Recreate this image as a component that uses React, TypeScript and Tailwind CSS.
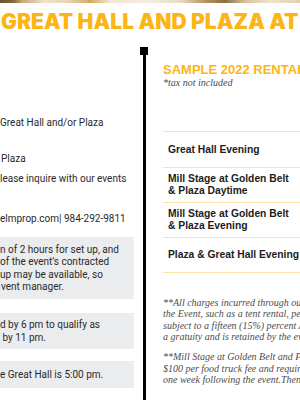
import React from "react";

const sans = { fontFamily: "Roboto, 'Liberation Sans', Arial, sans-serif" };
const arial = { fontFamily: "'Liberation Sans', Arial, sans-serif" };
const serif = { fontFamily: "'Liberation Serif', 'Times New Roman', serif" };
const title = { fontFamily: "Inter, 'Liberation Sans', sans-serif" };

const rows: string[][] = [
  ["Great Hall Evening"],
  ["Mill Stage at Golden Belt", "& Plaza Daytime"],
  ["Mill Stage at Golden Belt", "& Plaza Evening"],
  ["Plaza & Great Hall Evening"],
];

export default function App() {
  return (
    <div className="w-[300px] h-[400px] overflow-hidden bg-white flex flex-col">
      <div className="h-[3px] w-full shrink-0 bg-[linear-gradient(90deg,#6b5030_0px,#8a6a40_14px,#c9a877_22px,#efe3cf_45px,#e6d2ae_70px,#d4a860_90px,#f1e6d4_110px,#f5ecdf_150px,#e9dcc4_180px,#b89462_205px,#8d6d45_225px,#d8c09a_245px,#f0e4d0_270px,#e2cfae_300px)]" />
      <div className="h-[44px] shrink-0 pt-[8px] pl-[1px]">
        <div
          className="whitespace-nowrap text-[21px] leading-[21px] font-black tracking-[0.004em] text-[#FDB515]"
          style={title}
        >
          GREAT HALL AND PLAZA AT CHECKPOINT
        </div>
      </div>
      <div className="flex flex-1 items-stretch">
        {/* left column */}
        <div className="w-[134px] shrink-0 text-[10px] text-[#2a2a2a] whitespace-nowrap overflow-hidden" style={sans}>
          <div className="mt-[65.7px] leading-[20px]">Great Hall and/or Plaza</div>
          <div className="mt-[16.3px] leading-[20px] pl-[1px]">Plaza</div>
          <div className="leading-[20px]">lease inquire with our events</div>
          <div className="leading-[20px]">&nbsp;</div>
          <div className="leading-[20px]">elmprop.com| 984-292-9811</div>
          <div className="mt-[8px] bg-[#ebecee] pt-[7px] pb-[5px] leading-[12.5px]">
            <div>n of 2 hours for set up, and</div>
            <div>of the event’s contracted</div>
            <div>up may be available, so</div>
            <div className="pl-[1px]">vent manager.</div>
          </div>
          <div className="mt-[14px] bg-[#ebecee] py-[5px] leading-[13px]">
            <div>d by 6 pm to qualify as</div>
            <div className="whitespace-pre"> by 11 pm.</div>
          </div>
          <div className="mt-[12px] bg-[#ebecee] py-[7px] leading-[13px]">
            <div>e Great Hall is 5:00 pm.</div>
          </div>
        </div>
        {/* divider */}
        <div className="ml-[6px] w-[8px] shrink-0 flex flex-col items-center">
          <div className="w-[8px] h-[8px] bg-black shrink-0" />
          <div className="w-[3px] flex-1 bg-black" />
        </div>
        {/* right column */}
        <div className="ml-[15px] flex-1 min-w-0 overflow-hidden">
          <div className="pt-[15px] whitespace-nowrap text-[13px] leading-[15px] font-bold text-[#FDB515]" style={arial}>
            SAMPLE 2022 RENTAL RATES
          </div>
          <div className="text-[10px] leading-[11px] italic text-[#4a4a4a]" style={serif}>
            *tax not included
          </div>
          <div className="mt-[43px] border-t border-[#fde3a4]">
            {rows.map((r, i) => (
              <div
                key={i}
                className={`${i === 0 ? "h-[36px]" : "h-[35px]"} border-b border-[#fde3a4] pl-[5px] flex flex-col justify-center whitespace-nowrap text-[10.3px] leading-[12px] font-bold text-[#1c1c1c]`}
                style={arial}
              >
                {r.map((t, j) => (
                  <div key={j}>{t}</div>
                ))}
              </div>
            ))}
          </div>
          <div className="mt-[24px] whitespace-nowrap italic text-[10px] leading-[11.4px] text-[#4d4d4d]" style={serif}>
            <div>**All charges incurred through our preferred vendors for</div>
            <div>the Event, such as a tent rental, personnel, or equipment are</div>
            <div>subject to a fifteen (15%) percent Administrative Fee. This is not</div>
            <div>a gratuity and is retained by the event center.</div>
            <div className="mt-[8.5px]">**Mill Stage at Golden Belt and Plaza events require a</div>
            <div>$100 per food truck fee and requires cleanup within</div>
            <div>one week following the event.Then a fee applies.</div>
          </div>
        </div>
      </div>
    </div>
  );
}
